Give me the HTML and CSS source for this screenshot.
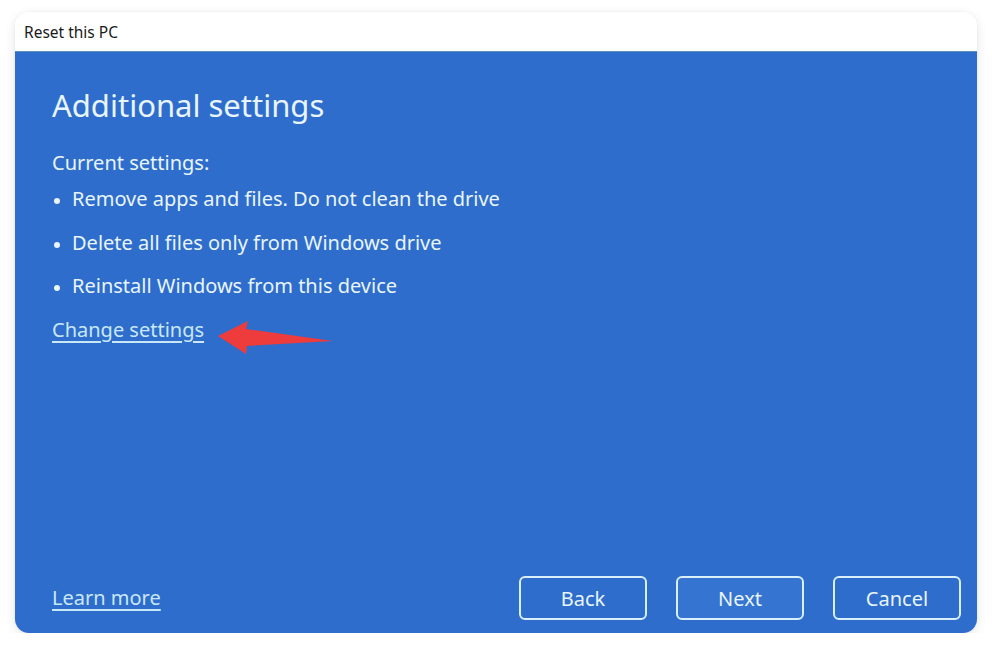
FILE: index.html
```html
<!DOCTYPE html>
<html>
<head>
<meta charset="utf-8">
<link rel="stylesheet" href="styles.css">
</head>
<body>
<div class="window">
  <div class="titlebar">Reset this PC</div>
  <div class="panel">
    <h1 class="heading">Additional settings</h1>
    <p class="label">Current settings:</p>
    <ul class="list">
      <li>Remove apps and files. Do not clean the drive</li>
      <li>Delete all files only from Windows drive</li>
      <li>Reinstall Windows from this device</li>
    </ul>
    <div class="change-row">
      <a class="link" href="#">Change settings</a>
      <svg class="arrow" width="120" height="40" viewBox="0 0 120 40">
        <polygon points="0,16 30,1 28,9 115,21 29,26 28,34" fill="#ee3b3b"/>
      </svg>
    </div>
    <div class="footer">
      <a class="link" href="#">Learn more</a>
      <div class="buttons">
        <button class="btn">Back</button>
        <button class="btn btn-primary">Next</button>
        <button class="btn">Cancel</button>
      </div>
    </div>
  </div>
</div>
</body>
</html>
```
FILE: styles.css
```css
* { box-sizing: border-box; }
html, body { margin: 0; padding: 0; background: #ffffff; }
body { font-family: "Noto Sans", "Open Sans", sans-serif; }
.window {
  margin: 12px 15px 0 15px;
  width: 962px;
  height: 621px;
  border-radius: 14px;
  overflow: hidden;
  box-shadow: 0 3px 12px rgba(0,0,0,0.10), 0 0 2px rgba(0,0,0,0.08);
  display: flex;
  flex-direction: column;
}
.titlebar {
  height: 40px;
  flex: none;
  background: #ffffff;
  color: #1b1b1b;
  font-size: 15.5px;
  padding-left: 9px;
  display: flex;
  align-items: center;
  border-bottom: 1px solid #5e8fb8;
}
.panel {
  flex: 1;
  background: #2e6dcc;
  color: #e8f5fb;
  padding: 0 37px 0 37px;
  display: flex;
  flex-direction: column;
}
.heading {
  margin: 33px 0 0 0;
  font-weight: 400;
  font-size: 31px;
  line-height: 40px;
  color: #e8f5fb;
}
.label {
  margin: 25px 0 0 0;
  font-size: 20px;
  line-height: 26px;
}
.list {
  margin: 10px 0 0 0;
  padding: 0 0 0 20px;
  font-size: 20px;
  line-height: 26px;
}
.list li { margin-bottom: 17.5px; }
.list li::marker { font-size: 16px; }
.change-row {
  position: relative;
  display: flex;
}
.link {
  color: #c9e8f7;
  font-size: 20px;
  line-height: 26px;
  text-decoration: underline;
  text-underline-offset: 4px;
  text-decoration-thickness: 1.5px;
}
.arrow {
  position: absolute;
  left: 166px;
  top: 3px;
}
.footer {
  margin-top: auto;
  margin-bottom: 13px;
  display: flex;
  align-items: center;
  justify-content: space-between;
}
.buttons {
  display: flex;
  gap: 29px;
  margin-right: -21px;
}
.btn {
  width: 128px;
  height: 44px;
  border: 2px solid #d9f0fa;
  border-radius: 6px;
  background: #2e6dcc;
  color: #e8f5fb;
  font-family: inherit;
  font-size: 20px;
}
.btn-primary { background: #3574d0; }
```
